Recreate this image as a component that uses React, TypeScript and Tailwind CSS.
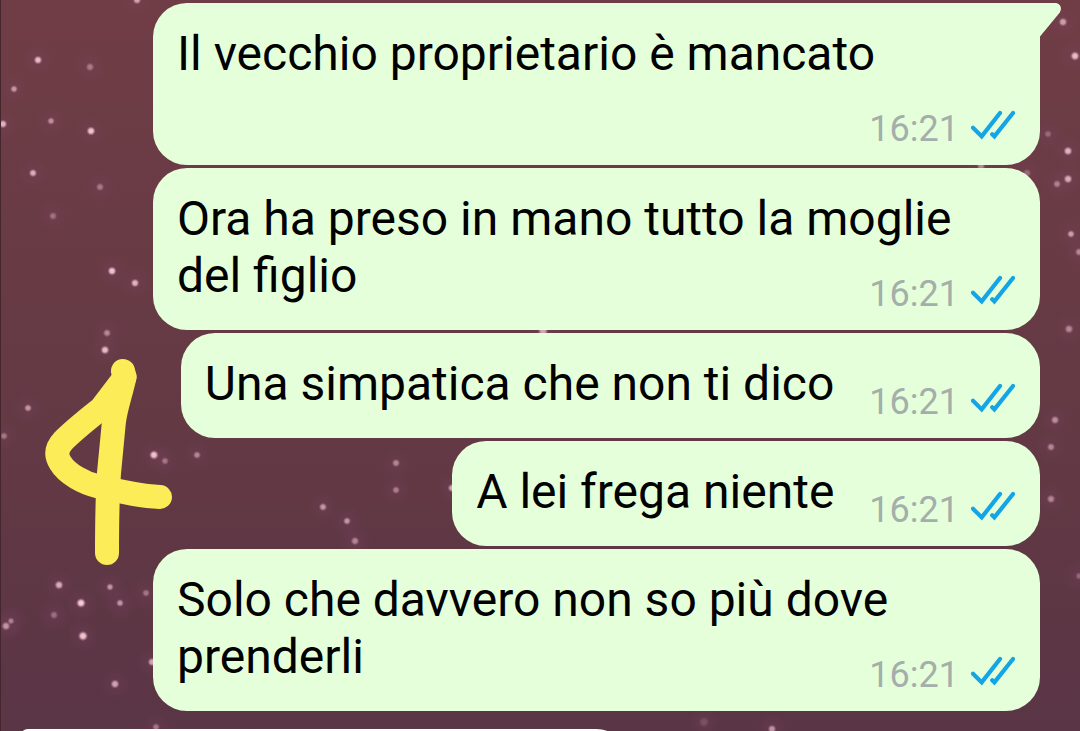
type Message = { text: string; time: string; first?: boolean };

const messages: Message[] = [
  { text: "Il vecchio proprietario è mancato", time: "16:21", first: true },
  { text: "Ora ha preso in mano tutto la moglie del figlio", time: "16:21" },
  { text: "Una simpatica che non ti dico", time: "16:21" },
  { text: "A lei frega niente", time: "16:21" },
  { text: "Solo che davvero non so più dove prenderli", time: "16:21" },
];

// x, y, radius, opacity
const stars: [number, number, number, number][] = [
  [137, 0, 3, 0.7], [38, 60, 3, 0.85], [90, 67, 3, 0.4], [14, 89, 2.5, 0.6],
  [3, 124, 3, 0.8], [51, 121, 2.5, 0.55], [91, 131, 3.2, 0.9], [33, 173, 2.8, 0.75],
  [100, 187, 2.8, 0.4], [53, 216, 2.8, 0.35], [112, 271, 3.2, 0.9], [135, 283, 3, 0.8],
  [107, 333, 2.8, 0.5], [105, 350, 3.2, 0.85], [28, 408, 2.6, 0.6], [4, 436, 2.6, 0.4],
  [154, 455, 3.4, 0.95],
  [165, 461, 2.5, 0.4], [197, 455, 2.6, 0.5], [396, 463, 2.8, 0.5], [396, 490, 2.6, 0.45],
  [323, 507, 2.8, 0.6], [347, 521, 2.6, 0.6], [355, 541, 3, 0.5], [452, 488, 3, 0.7],
  [59, 585, 3.2, 0.75], [81, 603, 3.5, 0.95], [110, 587, 2.4, 0.6], [120, 603, 2.5, 0.6],
  [146, 593, 2.6, 0.4], [54, 615, 2.8, 0.35], [6, 626, 3.2, 0.7], [11, 621, 2.2, 0.45],
  [83, 636, 3.7, 0.9], [115, 684, 3.2, 0.7], [152, 662, 3, 0.7], [156, 727, 2.6, 0.4],
  [704, 722, 4, 0.15], [772, 729, 3, 0.6], [543, 331, 4, 0.7], [981, 166, 3, 0.5],
  [1027, 173, 3, 0.3], [1063, 22, 3.2, 0.65], [1075, 56, 3.4, 0.85], [1048, 134, 2.6, 0.3],
  [1068, 151, 3.2, 0.8], [1068, 179, 3.2, 0.8], [1057, 184, 2.8, 0.45], [1071, 234, 2.6, 0.65],
  [1079, 252, 2.8, 0.5], [1069, 329, 3.2, 0.5], [1055, 420, 3, 0.55], [1051, 447, 2.8, 0.5],
  [1051, 499, 3, 0.5], [1079, 576, 2.4, 0.3],
];

function Wallpaper() {
  return (
    <svg
      aria-hidden="true"
      className="absolute inset-0 h-full w-full"
      viewBox="0 0 1080 731"
      preserveAspectRatio="xMidYMid slice"
    >
      <defs>
        <radialGradient id="star">
          <stop offset="0" stopColor="#ffdde6" />
          <stop offset="0.45" stopColor="#f3c3cf" />
          <stop offset="1" stopColor="#b07888" stopOpacity="0" />
        </radialGradient>
        <radialGradient id="halo">
          <stop offset="0" stopColor="#7b4363" stopOpacity="0.3" />
          <stop offset="1" stopColor="#7b4363" stopOpacity="0" />
        </radialGradient>
      </defs>
      {stars.map(([x, y, r, o]) => (
        <g key={`${x}-${y}`}>
          <circle cx={x} cy={y} r={16} fill="url(#halo)" />
          <circle cx={x} cy={y} r={r + 1.6} fill="url(#star)" opacity={o} />
        </g>
      ))}
      <path d="M0.5 0V731" stroke="#45262e" />
    </svg>
  );
}

function ReadTicks() {
  return (
    <svg
      role="img"
      aria-label="Letto"
      className="h-[30px] w-11 shrink-0"
      viewBox="0 0 44 30"
      fill="none"
      stroke="#14a5e6"
      strokeWidth="4.2"
      strokeLinecap="round"
    >
      <path strokeLinecap="round" d="M2 17.800 10.700 26.400 29 3" />
      <path d="M21.200 24.200 23.400 26.400 42 3" />
    </svg>
  );
}

function Bubble({ text, time, first }: Message) {
  return (
    <li
      className={`relative flow-root w-fit rounded-[34px] bg-[#e5ffda] pt-[22px] pr-[25px] pb-[17px] pl-6 ${
        first ? "rounded-tr-none" : ""
      }`}
    >
      {first && (
        <svg
          aria-hidden="true"
          className="absolute top-0 left-full h-[34px] w-[22px]"
          viewBox="0 0 22 34"
          fill="#e5ffda"
        >
          <path d="M-1 0H15C20 0 22.500 5 19.800 9.500L0 33.500H-1Z" />
        </svg>
      )}
      <span>{text}</span>
      <span className="float-right ml-[35px] flex h-[66px] gap-3 pt-7">
        <time className="text-[36px] leading-[38px] text-[#a4aeaa]">{time}</time>
        <ReadTicks />
      </span>
    </li>
  );
}

function HandDrawnFour() {
  return (
    <svg
      role="img"
      aria-label="4"
      className="absolute top-[356px] left-[42px] h-[212px] w-[134px]"
      viewBox="42 356 134 212"
      fill="none"
      stroke="#fbec58"
      strokeWidth="24"
      strokeLinecap="round"
      strokeLinejoin="round"
    >
      <path d="M123 371 124.500 377 119.500 384.400 101 408.500C88 419 75 429 63.500 440.500C56.500 448 55.500 455 60.500 463C67 474 84 483 97 486C117 491 138 496 160 497" />
      <path d="M124.500 377C120 397 115.500 408 113.800 423L109 473C107.500 495 107 525 107 553" />
    </svg>
  );
}

export default function App() {
  return (
    <main
      lang="it"
      className="relative h-screen overflow-hidden bg-linear-to-b from-[#703d46] via-[#653a44] to-[#5a3545] font-['Roboto','Liberation_Sans',sans-serif] text-[48px] leading-[57px] text-black"
    >
      <Wallpaper />
      <ol className="relative flex flex-col items-end gap-[3px] pt-[3px] pr-10 pl-[153px]">
        {messages.map((message) => (
          <Bubble key={message.text} {...message} />
        ))}
      </ol>
      <div className="relative mt-[18px] ml-5 h-[105px] w-[610px] rounded-tl-lg rounded-tr-[34px] bg-white" />
      <HandDrawnFour />
    </main>
  );
}
